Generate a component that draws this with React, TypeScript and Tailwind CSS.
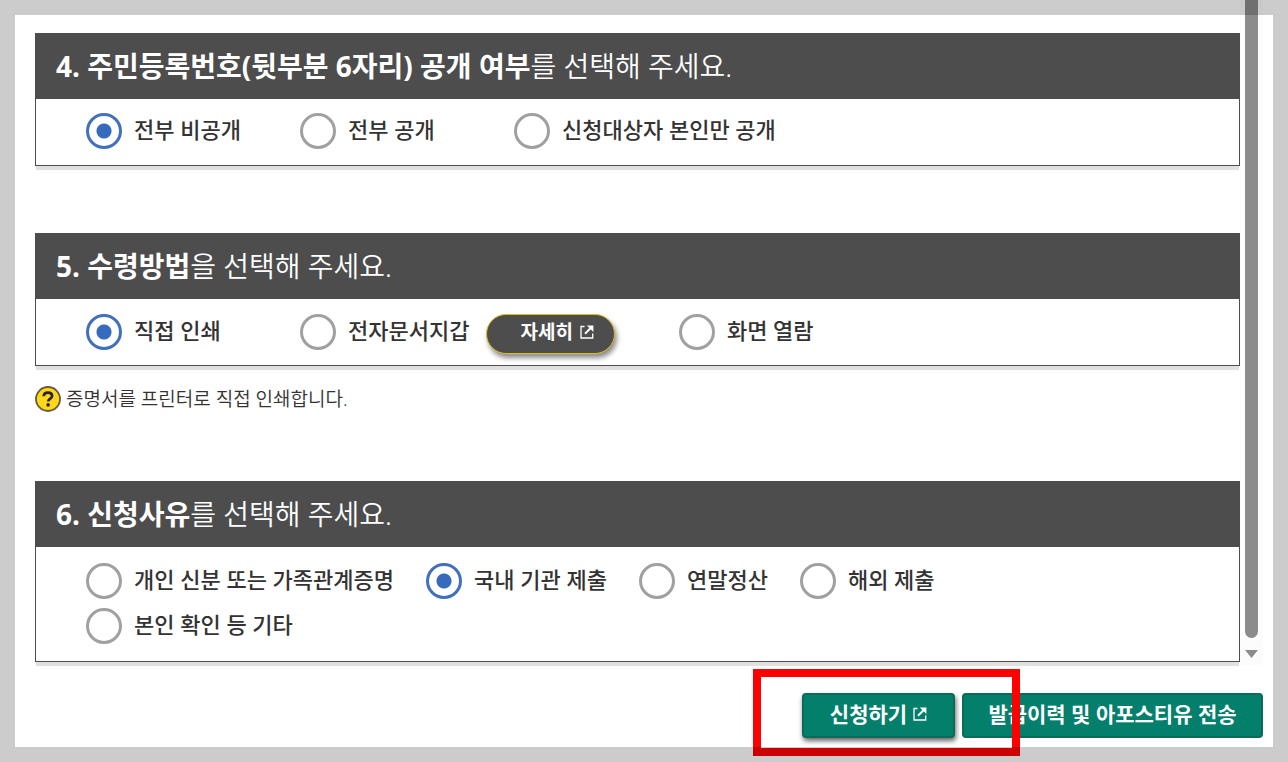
import React from "react";

type Option = {
  id: string;
  label: string;
  checked?: boolean;
};

const visibility: Option[] = [
  { id: "hide-all", label: "전부 비공개", checked: true },
  { id: "show-all", label: "전부 공개" },
  { id: "show-self", label: "신청대상자 본인만 공개" },
];

const reasonRows: Option[][] = [
  [
    { id: "family", label: "개인 신분 또는 가족관계증명" },
    { id: "domestic", label: "국내 기관 제출", checked: true },
    { id: "tax", label: "연말정산" },
    { id: "overseas", label: "해외 제출" },
  ],
  [{ id: "etc", label: "본인 확인 등 기타" }],
];

const NewWindowIcon: React.FC = () => (
  <svg
    viewBox="0 0 14 14"
    className="w-[14px] h-[14px] shrink-0"
    fill="none"
    stroke="currentColor"
    aria-hidden="true"
  >
    <path d="M4.5 1.5H1V13H12.7V8.5" strokeWidth="1.3" />
    <path d="M5 8.8L10.5 3.3" strokeWidth="2" />
    <path d="M6.8 0.5H13.4V7.1Z" fill="currentColor" stroke="none" />
  </svg>
);

const Radio: React.FC<{ name: string; option: Option; className?: string }> = ({
  name,
  option,
  className = "",
}) => (
  <div className={`flex items-center gap-3 h-[45px] ${className}`}>
    <input
      type="radio"
      id={option.id}
      name={name}
      defaultChecked={option.checked}
      className="appearance-none w-9 h-9 shrink-0 rounded-full border-3 border-[#a0a0a0] bg-white checked:border-[#4270bd] checked:bg-[radial-gradient(circle,#356abc_7px,transparent_8px)]"
    />
    <label htmlFor={option.id} className="text-[22px] leading-8 font-medium whitespace-nowrap pb-1">
      {option.label}
    </label>
  </div>
);

const Section: React.FC<{
  no: number;
  strong: string;
  rest: string;
  children: React.ReactNode;
}> = ({ no, strong, rest, children }) => (
  <section className="border border-[#4d4d4d] bg-white shadow-[0_5px_0_-1px_#e0e0e0]">
    <h2 className="flex items-center h-[65px] px-5 pb-[2px] bg-[#4d4d4d] text-white text-[28px] font-[350] whitespace-pre">
      <strong className="font-bold">
        {no}. {strong}
      </strong>
      {rest}
    </h2>
    {children}
  </section>
);

const App: React.FC = () => {
  return (
    <div className="relative bg-white px-[15px] pb-[15px] text-[#333] font-['Noto_Sans','Noto_Sans_CJK_KR',sans-serif]">
      <div className="flex">
        {/* Form */}
        <main className="flex-1 min-w-0 pl-5 pt-[33px] pb-[3px]">
          <Section no={4} strong="주민등록번호(뒷부분 6자리) 공개 여부" rest="를 선택해 주세요.">
            <div className="flex items-center gap-[30px] h-[66px] px-[50px] pb-[2px]">
              {visibility.map((option) => (
                <Radio key={option.id} name="visibility" option={option} className="min-w-[184px]" />
              ))}
            </div>
          </Section>

          <div className="mt-[67px]">
            <Section no={5} strong="수령방법" rest="을 선택해 주세요.">
              <div className="flex items-center gap-[30px] h-[66px] px-[50px]">
                <Radio
                  name="receive"
                  option={{ id: "print", label: "직접 인쇄", checked: true }}
                  className="min-w-[184px]"
                />
                <div className="flex items-center gap-[17px] mr-[34px]">
                  <Radio name="receive" option={{ id: "wallet", label: "전자문서지갑" }} />
                  <button
                    type="button"
                    className="flex items-center gap-[7px] h-10 mt-1 pl-[33px] pr-5 pb-1 rounded-full border border-[#e0bf16] bg-[#4d4d4d] text-white text-[19px] leading-7 font-bold shadow-[2px_4px_5px_rgba(0,0,0,0.45)]"
                  >
                    자세히
                    <NewWindowIcon />
                  </button>
                </div>
                <Radio name="receive" option={{ id: "screen", label: "화면 열람" }} />
              </div>
            </Section>
          </div>

          <p className="flex items-center gap-[5px] h-[26px] mt-5 text-[19px] font-[350]">
            <svg viewBox="0 0 26 26" className="w-[26px] h-[26px]" fill="none" aria-hidden="true">
              <circle cx="13" cy="13" r="12" fill="#fcd71c" stroke="#6b5a3a" strokeWidth="1.8" />
              <path
                d="M8.8 10.2C8.8 7.8 10.6 6.7 13 6.7C15.5 6.7 17.1 7.9 17.1 9.9C17.1 12.6 13.2 12.7 13.2 15.6"
                stroke="#2b2416"
                strokeWidth="2.7"
              />
              <circle cx="13.1" cy="18.9" r="1.8" fill="#2b2416" />
            </svg>
            증명서를 프린터로 직접 인쇄합니다.
          </p>

          <div className="mt-[69px]">
            <Section no={6} strong="신청사유" rest="를 선택해 주세요.">
              <div className="pt-[11px] pb-[13px] px-[50px]">
                {reasonRows.map((row) => (
                  <div key={row[0].id} className="flex gap-8">
                    {row.map((option) => (
                      <Radio key={option.id} name="reason" option={option} />
                    ))}
                  </div>
                ))}
              </div>
            </Section>
          </div>
        </main>

        {/* Scrollbar */}
        <div className="flex flex-col items-center w-[23px] mr-[10px] bg-[#fcfcfc]" aria-hidden="true">
          <div className="flex-1 w-[13px] rounded-b-full bg-[#8b8b8b]" />
          <svg viewBox="0 0 13 8" className="w-[13px] h-2 mt-3 mb-[7px]" fill="#8b8b8b">
            <path d="M0 0H13L6.5 8Z" />
          </svg>
        </div>
      </div>

      {/* Action buttons */}
      <footer className="relative flex justify-end gap-[7px] pt-7 pb-[9px] pr-[10px] text-white text-[21px] leading-8 font-bold">
        <button
          type="button"
          className="flex items-center justify-center gap-[6px] w-[153px] h-[45px] pb-1 rounded border-2 border-[#0a6b58] bg-[#037f6c] shadow-[1px_3px_5px_rgba(0,0,0,0.6)]"
        >
          신청하기
          <NewWindowIcon />
        </button>
        <button
          type="button"
          className="w-[301px] h-[45px] pb-1 rounded border-2 border-[#0a6b58] bg-[#037f6c]"
        >
          발급이력 및 아포스티유 전송
        </button>
        <div className="absolute top-1 right-[253px] w-[267px] h-[87px] border-8 border-[#f00] pointer-events-none" />
      </footer>

      {/* Dimmed edge */}
      <div className="absolute inset-0 border-[15px] border-black/20 pointer-events-none" />
    </div>
  );
};

export default App;
